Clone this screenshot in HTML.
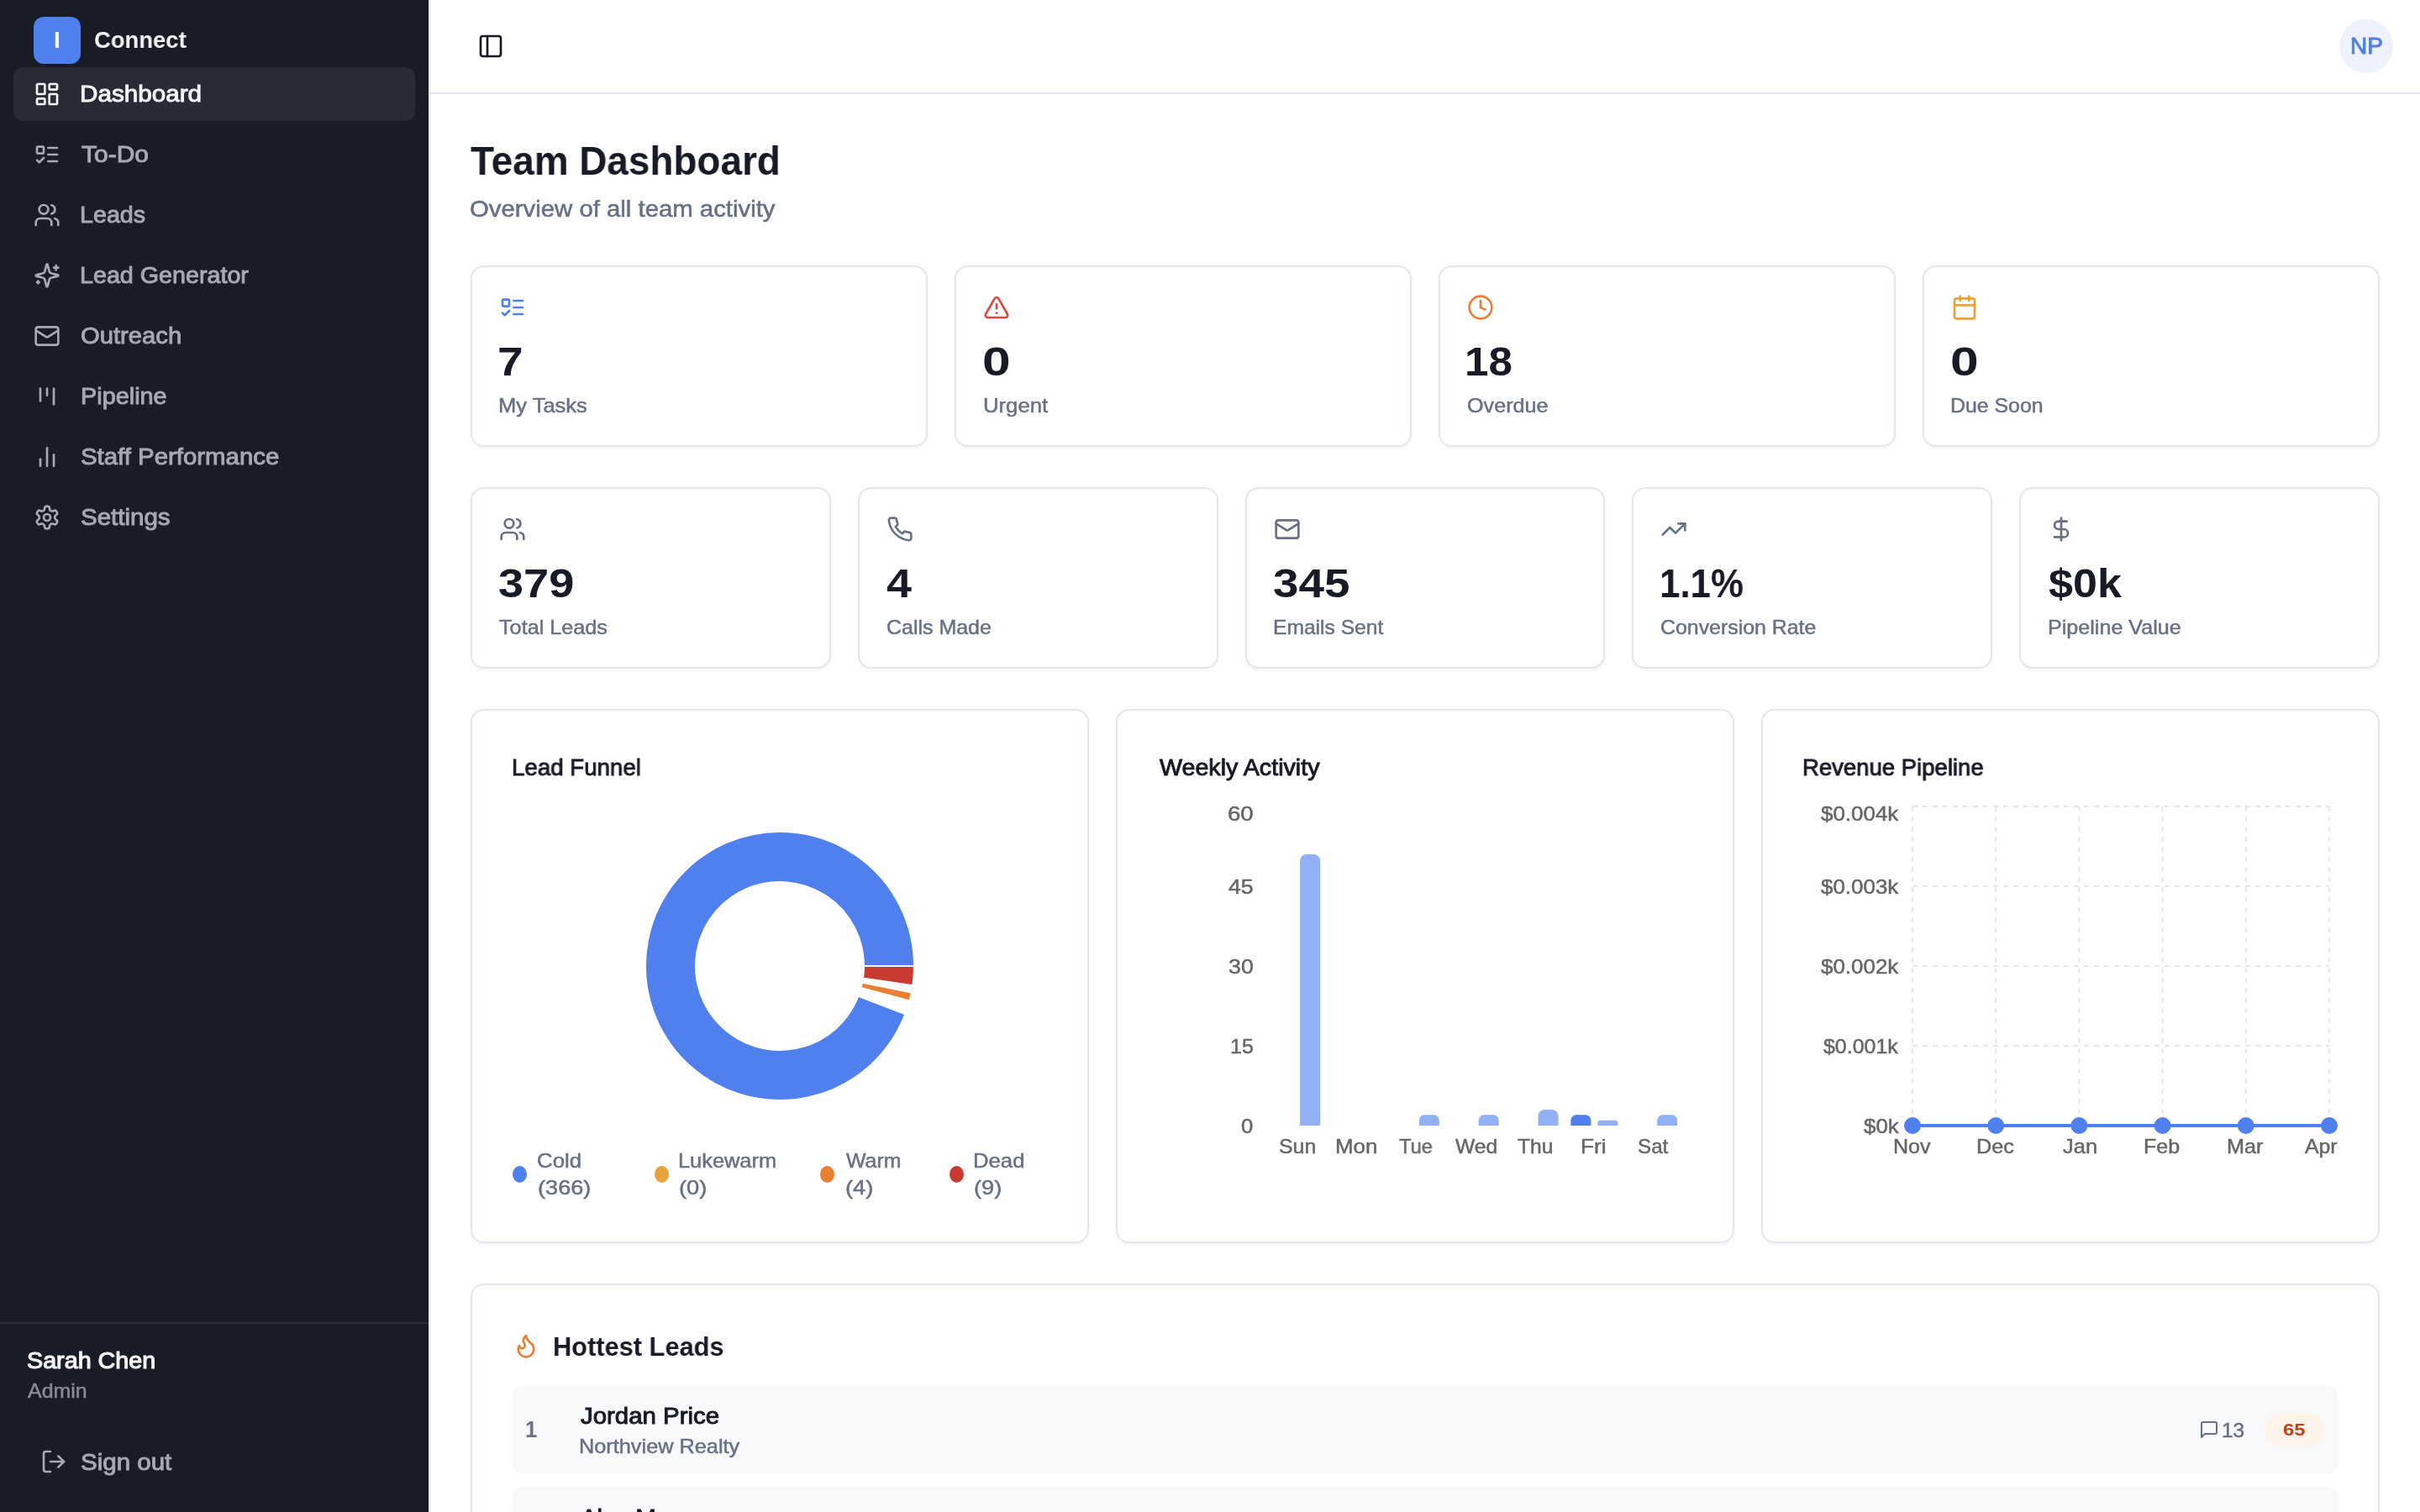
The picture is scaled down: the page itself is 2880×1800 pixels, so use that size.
<!DOCTYPE html>
<html lang="en"><head><meta charset="utf-8"><title>Connect - Team Dashboard</title>
<meta name="viewport" content="width=2880">
<style>
*{box-sizing:border-box;margin:0;padding:0}
html,body{width:2880px;height:1800px;overflow:hidden;background:#fff}
@media (max-width:2000px){html{zoom:.5}}
body{font-family:"Liberation Sans",sans-serif;color:#181b25;position:relative;-webkit-font-smoothing:antialiased}
.abs{position:absolute}
.ic{display:block;flex:none}
.t{position:absolute;white-space:nowrap;line-height:1;will-change:transform}
/* sidebar */
#sidebar{position:absolute;left:0;top:0;width:512px;height:1800px;background:#191c26;border-right:2px solid #e3e7ec}
.logo{position:absolute;left:40px;top:20px;width:56px;height:56px;border-radius:12px;background:#4f80ed;}
.nav{position:absolute;left:16px;width:478px;height:64px;border-radius:12px;color:#a6a9b2}
.nav.active{background:#272b36;color:#f4f5f7}
.nav .ic{position:absolute;left:24px;top:16px}
.sep{position:absolute;left:0;top:1574px;width:510px;height:2px;background:#2b2e3a}
/* header */
#header{position:absolute;left:512px;top:0;width:2368px;height:112px;border-bottom:2px solid #e3e7ec;background:#fff}
.avatar{position:absolute;left:2784px;top:23px;width:64px;height:64px;border-radius:50%;background:#eef2fd}
/* cards */
.card{position:absolute;background:#fff;border:2px solid #e3e7ec;border-radius:16px;box-shadow:0 2px 4px rgba(16,24,40,.05)}
.row{position:absolute;background:#f8f9fb;border-radius:12px}
.badge{position:absolute;border-radius:999px;background:#fff4ea}
.dot{position:absolute;border-radius:50%}
</style></head>
<body>
<aside id="sidebar"><div class="logo"></div><div class="t" style="left:68px;transform:translateX(-50%);top:33.90px;font-size:28px;color:#fff;font-weight:700;">I</div><div class="t" id="connect" style="left:111.65px;top:34.30px;font-size:28px;color:#f4f5f7;font-weight:700;transform:scaleX(0.9784);transform-origin:0 50%;">Connect</div><a class="nav active" style="top:80px"><svg class="ic" width="32" height="32" viewBox="0 0 24 24" fill="none" stroke="currentColor" stroke-width="2" stroke-linecap="round" stroke-linejoin="round" style=""><rect width="7" height="9" x="3" y="3" rx="1"/><rect width="7" height="5" x="14" y="3" rx="1"/><rect width="7" height="9" x="14" y="12" rx="1"/><rect width="7" height="5" x="3" y="16" rx="1"/></svg></a><div class="t" id="nav0" style="left:95.23px;top:98.30px;font-size:28px;color:#f4f5f7;font-weight:400;-webkit-text-stroke:0.95px #f4f5f7;transform:scaleX(1.0586);transform-origin:0 50%;">Dashboard</div><a class="nav" style="top:152px"><svg class="ic" width="32" height="32" viewBox="0 0 24 24" fill="none" stroke="currentColor" stroke-width="2" stroke-linecap="round" stroke-linejoin="round" style=""><rect x="3" y="5" width="6" height="6" rx="1"/><path d="m3 17 2 2 4-4"/><path d="M13 6h8"/><path d="M13 12h8"/><path d="M13 18h8"/></svg></a><div class="t" id="nav1" style="left:96.72px;top:170.30px;font-size:28px;color:#a6a9b2;font-weight:400;-webkit-text-stroke:0.95px #a6a9b2;transform:scaleX(1.0702);transform-origin:0 50%;">To-Do</div><a class="nav" style="top:224px"><svg class="ic" width="32" height="32" viewBox="0 0 24 24" fill="none" stroke="currentColor" stroke-width="2" stroke-linecap="round" stroke-linejoin="round" style=""><path d="M16 21v-2a4 4 0 0 0-4-4H6a4 4 0 0 0-4 4v2"/><circle cx="9" cy="7" r="4"/><path d="M22 21v-2a4 4 0 0 0-3-3.87"/><path d="M16 3.13a4 4 0 0 1 0 7.75"/></svg></a><div class="t" id="nav2" style="left:94.96px;top:242.30px;font-size:28px;color:#a6a9b2;font-weight:400;-webkit-text-stroke:0.95px #a6a9b2;transform:scaleX(1.0236);transform-origin:0 50%;">Leads</div><a class="nav" style="top:296px"><svg class="ic" width="32" height="32" viewBox="0 0 24 24" fill="none" stroke="currentColor" stroke-width="2" stroke-linecap="round" stroke-linejoin="round" style=""><path d="M9.937 15.5A2 2 0 0 0 8.5 14.063l-6.135-1.582a.5.5 0 0 1 0-.962L8.5 9.936A2 2 0 0 0 9.937 8.5l1.582-6.135a.5.5 0 0 1 .963 0L14.063 8.5A2 2 0 0 0 15.5 9.937l6.135 1.581a.5.5 0 0 1 0 .964L15.5 14.063a2 2 0 0 0-1.437 1.437l-1.582 6.135a.5.5 0 0 1-.963 0z"/><path d="M20 3v4"/><path d="M22 5h-4"/><path d="M4 17v2"/><path d="M5 18H3"/></svg></a><div class="t" id="nav3" style="left:94.96px;top:314.30px;font-size:28px;color:#a6a9b2;font-weight:400;-webkit-text-stroke:0.95px #a6a9b2;transform:scaleX(1.0244);transform-origin:0 50%;">Lead Generator</div><a class="nav" style="top:368px"><svg class="ic" width="32" height="32" viewBox="0 0 24 24" fill="none" stroke="currentColor" stroke-width="2" stroke-linecap="round" stroke-linejoin="round" style=""><rect width="20" height="16" x="2" y="4" rx="2"/><path d="m22 7-8.97 5.7a1.94 1.94 0 0 1-2.06 0L2 7"/></svg></a><div class="t" id="nav4" style="left:96.18px;top:386.30px;font-size:28px;color:#a6a9b2;font-weight:400;-webkit-text-stroke:0.95px #a6a9b2;transform:scaleX(1.0431);transform-origin:0 50%;">Outreach</div><a class="nav" style="top:440px"><svg class="ic" width="32" height="32" viewBox="0 0 24 24" fill="none" stroke="currentColor" stroke-width="2" stroke-linecap="round" stroke-linejoin="round" style=""><path d="M6 5v11"/><path d="M12 5v6"/><path d="M18 5v14"/></svg></a><div class="t" id="nav5" style="left:95.64px;top:458.30px;font-size:28px;color:#a6a9b2;font-weight:400;-webkit-text-stroke:0.95px #a6a9b2;transform:scaleX(1.0303);transform-origin:0 50%;">Pipeline</div><a class="nav" style="top:512px"><svg class="ic" width="32" height="32" viewBox="0 0 24 24" fill="none" stroke="currentColor" stroke-width="2" stroke-linecap="round" stroke-linejoin="round" style=""><line x1="18" x2="18" y1="20" y2="10"/><line x1="12" x2="12" y1="20" y2="4"/><line x1="6" x2="6" y1="20" y2="14"/></svg></a><div class="t" id="nav6" style="left:96.24px;top:530.30px;font-size:28px;color:#a6a9b2;font-weight:400;-webkit-text-stroke:0.95px #a6a9b2;transform:scaleX(1.0493);transform-origin:0 50%;">Staff Performance</div><a class="nav" style="top:584px"><svg class="ic" width="32" height="32" viewBox="0 0 24 24" fill="none" stroke="currentColor" stroke-width="2" stroke-linecap="round" stroke-linejoin="round" style=""><path d="M12.22 2h-.44a2 2 0 0 0-2 2v.18a2 2 0 0 1-1 1.73l-.43.25a2 2 0 0 1-2 0l-.15-.08a2 2 0 0 0-2.73.73l-.22.38a2 2 0 0 0 .73 2.73l.15.1a2 2 0 0 1 1 1.72v.51a2 2 0 0 1-1 1.74l-.15.09a2 2 0 0 0-.73 2.73l.22.38a2 2 0 0 0 2.73.73l.15-.08a2 2 0 0 1 2 0l.43.25a2 2 0 0 1 1 1.73V20a2 2 0 0 0 2 2h.44a2 2 0 0 0 2-2v-.18a2 2 0 0 1 1-1.73l.43-.25a2 2 0 0 1 2 0l.15.08a2 2 0 0 0 2.73-.73l.22-.39a2 2 0 0 0-.73-2.73l-.15-.08a2 2 0 0 1-1-1.74v-.5a2 2 0 0 1 1-1.74l.15-.09a2 2 0 0 0 .73-2.73l-.22-.38a2 2 0 0 0-2.73-.73l-.15.08a2 2 0 0 1-2 0l-.43-.25a2 2 0 0 1-1-1.73V4a2 2 0 0 0-2-2z"/><circle cx="12" cy="12" r="3"/></svg></a><div class="t" id="nav7" style="left:96.24px;top:602.30px;font-size:28px;color:#a6a9b2;font-weight:400;-webkit-text-stroke:0.95px #a6a9b2;transform:scaleX(1.0537);transform-origin:0 50%;">Settings</div><div class="sep"></div><div class="t" id="sarah" style="left:32.01px;top:1606.30px;font-size:28px;color:#f4f5f7;font-weight:400;-webkit-text-stroke:1.15px #f4f5f7;transform:scaleX(1.0255);transform-origin:0 50%;">Sarah Chen</div><div class="t" id="admin" style="left:32.61px;top:1644.18px;font-size:24px;color:#888b95;font-weight:400;-webkit-text-stroke:0.48px #888b95;transform:scaleX(1.0387);transform-origin:0 50%;">Admin</div><div class="abs" style="left:48px;top:1724px;color:#a6a9b2"><svg class="ic" width="32" height="32" viewBox="0 0 24 24" fill="none" stroke="currentColor" stroke-width="2" stroke-linecap="round" stroke-linejoin="round" style=""><path d="M9 21H5a2 2 0 0 1-2-2V5a2 2 0 0 1 2-2h4"/><polyline points="16 17 21 12 16 7"/><line x1="21" x2="9" y1="12" y2="12"/></svg></div><div class="t" id="signout" style="left:95.84px;top:1726.80px;font-size:28px;color:#a6a9b2;font-weight:400;-webkit-text-stroke:0.95px #a6a9b2;transform:scaleX(1.0543);transform-origin:0 50%;">Sign out</div></aside><header id="header"></header><div class="abs" style="left:568px;top:39px;color:#181b25"><svg class="ic" width="32" height="32" viewBox="0 0 24 24" fill="none" stroke="currentColor" stroke-width="2" stroke-linecap="round" stroke-linejoin="round" style=""><rect width="18" height="18" x="3" y="3" rx="2"/><path d="M9 3v18"/></svg></div><div class="avatar"></div><div class="t" id="np" style="left:2796.93px;top:41.20px;font-size:28px;color:#4f80ed;font-weight:400;-webkit-text-stroke:0.95px #4f80ed;transform:scaleX(0.9901);transform-origin:0 50%;">NP</div><div class="t" id="title" style="left:559.87px;top:167.67px;font-size:48px;color:#181b25;font-weight:700;transform:scaleX(0.9559);transform-origin:0 50%;">Team Dashboard</div><div class="t" id="subtitle" style="left:559.19px;top:235.20px;font-size:28px;color:#677084;font-weight:400;-webkit-text-stroke:0.56px #677084;transform:scaleX(1.0475);transform-origin:0 50%;">Overview of all team activity</div><section class="card" style="left:560px;top:316px;width:544px;height:216px"></section><div class="abs" style="left:594px;top:350px"><svg class="ic" width="32" height="32" viewBox="0 0 24 24" fill="none" stroke="#4f80ed" stroke-width="2" stroke-linecap="round" stroke-linejoin="round" style=""><rect x="3" y="5" width="6" height="6" rx="1"/><path d="m3 17 2 2 4-4"/><path d="M13 6h8"/><path d="M13 12h8"/><path d="M13 18h8"/></svg></div><div class="t" id="s1n0" style="left:592.22px;top:407.17px;font-size:48px;color:#181b25;font-weight:700;transform:scaleX(1.1463);transform-origin:0 50%;">7</div><div class="t" id="s1l0" style="left:592.81px;top:471.08px;font-size:24px;color:#677084;font-weight:400;-webkit-text-stroke:0.48px #677084;transform:scaleX(1.0628);transform-origin:0 50%;">My Tasks</div><section class="card" style="left:1136px;top:316px;width:544px;height:216px"></section><div class="abs" style="left:1170px;top:350px"><svg class="ic" width="32" height="32" viewBox="0 0 24 24" fill="none" stroke="#dc4a3f" stroke-width="2" stroke-linecap="round" stroke-linejoin="round" style=""><path d="m21.73 18-8-14a2 2 0 0 0-3.48 0l-8 14A2 2 0 0 0 4 21h16a2 2 0 0 0 1.73-3"/><path d="M12 9v4"/><path d="M12 17h.01"/></svg></div><div class="t" id="s1n1" style="left:1168.78px;top:407.17px;font-size:48px;color:#181b25;font-weight:700;transform:scaleX(1.2602);transform-origin:0 50%;">0</div><div class="t" id="s1l1" style="left:1169.59px;top:471.08px;font-size:24px;color:#677084;font-weight:400;-webkit-text-stroke:0.48px #677084;transform:scaleX(1.0699);transform-origin:0 50%;">Urgent</div><section class="card" style="left:1712px;top:316px;width:544px;height:216px"></section><div class="abs" style="left:1746px;top:350px"><svg class="ic" width="32" height="32" viewBox="0 0 24 24" fill="none" stroke="#e97f35" stroke-width="2" stroke-linecap="round" stroke-linejoin="round" style=""><circle cx="12" cy="12" r="10"/><polyline points="12 6 12 12 16 14"/></svg></div><div class="t" id="s1n2" style="left:1743.06px;top:407.17px;font-size:48px;color:#181b25;font-weight:700;transform:scaleX(1.0678);transform-origin:0 50%;">18</div><div class="t" id="s1l2" style="left:1745.66px;top:471.08px;font-size:24px;color:#677084;font-weight:400;-webkit-text-stroke:0.48px #677084;transform:scaleX(1.049);transform-origin:0 50%;">Overdue</div><section class="card" style="left:2288px;top:316px;width:544px;height:216px"></section><div class="abs" style="left:2322px;top:350px"><svg class="ic" width="32" height="32" viewBox="0 0 24 24" fill="none" stroke="#e9a23b" stroke-width="2" stroke-linecap="round" stroke-linejoin="round" style=""><path d="M8 2v4"/><path d="M16 2v4"/><rect width="18" height="18" x="3" y="4" rx="2"/><path d="M3 10h18"/></svg></div><div class="t" id="s1n3" style="left:2320.78px;top:407.17px;font-size:48px;color:#181b25;font-weight:700;transform:scaleX(1.2602);transform-origin:0 50%;">0</div><div class="t" id="s1l3" style="left:2321.46px;top:471.08px;font-size:24px;color:#677084;font-weight:400;-webkit-text-stroke:0.48px #677084;transform:scaleX(1.0358);transform-origin:0 50%;">Due Soon</div><section class="card" style="left:560.0px;top:580px;width:428.8px;height:216px"></section><div class="abs" style="left:594.0px;top:614px"><svg class="ic" width="32" height="32" viewBox="0 0 24 24" fill="none" stroke="#677084" stroke-width="2" stroke-linecap="round" stroke-linejoin="round" style=""><path d="M16 21v-2a4 4 0 0 0-4-4H6a4 4 0 0 0-4 4v2"/><circle cx="9" cy="7" r="4"/><path d="M22 21v-2a4 4 0 0 0-3-3.87"/><path d="M16 3.13a4 4 0 0 1 0 7.75"/></svg></div><div class="t" id="s2n0" style="left:593.01px;top:671.17px;font-size:48px;color:#181b25;font-weight:700;transform:scaleX(1.1276);transform-origin:0 50%;">379</div><div class="t" id="s2l0" style="left:594.35px;top:735.08px;font-size:24px;color:#677084;font-weight:400;-webkit-text-stroke:0.48px #677084;transform:scaleX(1.0504);transform-origin:0 50%;">Total Leads</div><section class="card" style="left:1020.8px;top:580px;width:428.8px;height:216px"></section><div class="abs" style="left:1054.8px;top:614px"><svg class="ic" width="32" height="32" viewBox="0 0 24 24" fill="none" stroke="#677084" stroke-width="2" stroke-linecap="round" stroke-linejoin="round" style=""><path d="M22 16.92v3a2 2 0 0 1-2.18 2 19.79 19.79 0 0 1-8.63-3.07 19.5 19.5 0 0 1-6-6 19.79 19.79 0 0 1-3.07-8.67A2 2 0 0 1 4.11 2h3a2 2 0 0 1 2 1.72 12.84 12.84 0 0 0 .7 2.81 2 2 0 0 1-.45 2.11L8.09 9.91a16 16 0 0 0 6 6l1.27-1.27a2 2 0 0 1 2.11-.45 12.84 12.84 0 0 0 2.81.7A2 2 0 0 1 22 16.92z"/></svg></div><div class="t" id="s2n1" style="left:1054.85px;top:671.17px;font-size:48px;color:#181b25;font-weight:700;transform:scaleX(1.1207);transform-origin:0 50%;">4</div><div class="t" id="s2l1" style="left:1054.53px;top:735.08px;font-size:24px;color:#677084;font-weight:400;-webkit-text-stroke:0.48px #677084;transform:scaleX(1.0402);transform-origin:0 50%;">Calls Made</div><section class="card" style="left:1481.6px;top:580px;width:428.8px;height:216px"></section><div class="abs" style="left:1515.6px;top:614px"><svg class="ic" width="32" height="32" viewBox="0 0 24 24" fill="none" stroke="#677084" stroke-width="2" stroke-linecap="round" stroke-linejoin="round" style=""><rect width="20" height="16" x="2" y="4" rx="2"/><path d="m22 7-8.97 5.7a1.94 1.94 0 0 1-2.06 0L2 7"/></svg></div><div class="t" id="s2n2" style="left:1514.63px;top:671.17px;font-size:48px;color:#181b25;font-weight:700;transform:scaleX(1.1408);transform-origin:0 50%;">345</div><div class="t" id="s2l2" style="left:1514.56px;top:735.08px;font-size:24px;color:#677084;font-weight:400;-webkit-text-stroke:0.48px #677084;transform:scaleX(1.0248);transform-origin:0 50%;">Emails Sent</div><section class="card" style="left:1942.4px;top:580px;width:428.8px;height:216px"></section><div class="abs" style="left:1976.4px;top:614px"><svg class="ic" width="32" height="32" viewBox="0 0 24 24" fill="none" stroke="#677084" stroke-width="2" stroke-linecap="round" stroke-linejoin="round" style=""><polyline points="22 7 13.5 15.5 8.5 10.5 2 17"/><polyline points="16 7 22 7 22 13"/></svg></div><div class="t" id="s2n3" style="left:1974.58px;top:671.17px;font-size:48px;color:#181b25;font-weight:700;transform:scaleX(0.9134);transform-origin:0 50%;">1.1%</div><div class="t" id="s2l3" style="left:1976.25px;top:735.08px;font-size:24px;color:#677084;font-weight:400;-webkit-text-stroke:0.48px #677084;transform:scaleX(1.0368);transform-origin:0 50%;">Conversion Rate</div><section class="card" style="left:2403.2px;top:580px;width:428.8px;height:216px"></section><div class="abs" style="left:2437.2px;top:614px"><svg class="ic" width="32" height="32" viewBox="0 0 24 24" fill="none" stroke="#677084" stroke-width="2" stroke-linecap="round" stroke-linejoin="round" style=""><line x1="12" x2="12" y1="2" y2="22"/><path d="M17 5H9.5a3.5 3.5 0 0 0 0 7h5a3.5 3.5 0 0 1 0 7H6"/></svg></div><div class="t" id="s2n4" style="left:2438.02px;top:671.17px;font-size:48px;color:#181b25;font-weight:700;transform:scaleX(1.085);transform-origin:0 50%;">$0k</div><div class="t" id="s2l4" style="left:2437.13px;top:735.08px;font-size:24px;color:#677084;font-weight:400;-webkit-text-stroke:0.48px #677084;transform:scaleX(1.0462);transform-origin:0 50%;">Pipeline Value</div><section class="card" style="left:560px;top:844px;width:736px;height:636px"></section><div class="t" id="ct0" style="left:609.1px;top:900.30px;font-size:28px;color:#181b25;font-weight:400;-webkit-text-stroke:0.95px #181b25;transform:scaleX(0.9882);transform-origin:0 50%;">Lead Funnel</div><section class="card" style="left:1328px;top:844px;width:736px;height:636px"></section><div class="t" id="ct1" style="left:1379.62px;top:900.30px;font-size:28px;color:#181b25;font-weight:400;-webkit-text-stroke:0.95px #181b25;transform:scaleX(1.0229);transform-origin:0 50%;">Weekly Activity</div><section class="card" style="left:2096px;top:844px;width:736px;height:636px"></section><div class="t" id="ct2" style="left:2144.71px;top:900.30px;font-size:28px;color:#181b25;font-weight:400;-webkit-text-stroke:0.95px #181b25;transform:scaleX(0.9824);transform-origin:0 50%;">Revenue Pipeline</div><svg class="abs" style="left:610px;top:950px" width="636" height="400" viewBox="0 0 636 400"><path d="M478.00,200.00A160,160,0,1,0,467.33,257.44L411.33,235.90A100,100,0,1,1,418.00,200.00Z" fill="#4f80ed" stroke="#fff" stroke-width="2"/><path d="M472.52,241.52A160,160,0,0,0,474.88,231.45L416.05,219.65A100,100,0,0,1,414.57,225.95Z" fill="#e97f35" stroke="#fff" stroke-width="2"/><path d="M476.31,223.19A160,160,0,0,0,478.00,200.00L418.00,200.00A100,100,0,0,1,416.94,214.50Z" fill="#c93a32" stroke="#fff" stroke-width="2"/></svg><div class="dot" style="left:610px;top:1388px;width:17px;height:20px;background:#4f80ed"></div><div class="t" id="lgA0" style="left:639.0px;top:1370.48px;font-size:24px;color:#677084;font-weight:400;-webkit-text-stroke:0.48px #677084;transform:scaleX(1.0748);transform-origin:0 50%;">Cold</div><div class="t" id="lgB0" style="left:639.69px;top:1402.48px;font-size:24px;color:#677084;font-weight:400;-webkit-text-stroke:0.48px #677084;transform:scaleX(1.1311);transform-origin:0 50%;">(366)</div><div class="dot" style="left:779px;top:1388px;width:17px;height:20px;background:#e9a23b"></div><div class="t" id="lgA1" style="left:807.22px;top:1370.48px;font-size:24px;color:#677084;font-weight:400;-webkit-text-stroke:0.48px #677084;transform:scaleX(1.0572);transform-origin:0 50%;">Lukewarm</div><div class="t" id="lgB1" style="left:808.28px;top:1402.48px;font-size:24px;color:#677084;font-weight:400;-webkit-text-stroke:0.48px #677084;transform:scaleX(1.1385);transform-origin:0 50%;">(0)</div><div class="dot" style="left:976px;top:1388px;width:17px;height:20px;background:#e97f35"></div><div class="t" id="lgA2" style="left:1006.5px;top:1370.48px;font-size:24px;color:#677084;font-weight:400;-webkit-text-stroke:0.48px #677084;transform:scaleX(1.0368);transform-origin:0 50%;">Warm</div><div class="t" id="lgB2" style="left:1005.88px;top:1402.48px;font-size:24px;color:#677084;font-weight:400;-webkit-text-stroke:0.48px #677084;transform:scaleX(1.1348);transform-origin:0 50%;">(4)</div><div class="dot" style="left:1130px;top:1388px;width:17px;height:20px;background:#c93a32"></div><div class="t" id="lgA3" style="left:1158.2px;top:1370.48px;font-size:24px;color:#677084;font-weight:400;-webkit-text-stroke:0.48px #677084;transform:scaleX(1.0714);transform-origin:0 50%;">Dead</div><div class="t" id="lgB3" style="left:1159.49px;top:1402.48px;font-size:24px;color:#677084;font-weight:400;-webkit-text-stroke:0.48px #677084;transform:scaleX(1.131);transform-origin:0 50%;">(9)</div><div class="t" id="by0" style="left:1476.6px;top:1328.98px;font-size:24px;color:#666666;font-weight:400;-webkit-text-stroke:0.48px #666666;transform:scaleX(1.0727);transform-origin:0 50%;">0</div><div class="t" id="by1" style="left:1464.08px;top:1233.98px;font-size:24px;color:#666666;font-weight:400;-webkit-text-stroke:0.48px #666666;transform:scaleX(1.0407);transform-origin:0 50%;">15</div><div class="t" id="by2" style="left:1462.05px;top:1138.98px;font-size:24px;color:#666666;font-weight:400;-webkit-text-stroke:0.48px #666666;transform:scaleX(1.1183);transform-origin:0 50%;">30</div><div class="t" id="by3" style="left:1462.26px;top:1043.98px;font-size:24px;color:#666666;font-weight:400;-webkit-text-stroke:0.48px #666666;transform:scaleX(1.112);transform-origin:0 50%;">45</div><div class="t" id="by4" style="left:1461.24px;top:956.98px;font-size:24px;color:#666666;font-weight:400;-webkit-text-stroke:0.48px #666666;transform:scaleX(1.15);transform-origin:0 50%;">60</div><svg class="abs" style="left:1378px;top:950px" width="636" height="460" viewBox="1378 950 636 460"><path d="M1547.09,1025.00A8.00,8.00,0,0,1,1555.09,1017.00L1563.09,1017.00A8.00,8.00,0,0,1,1571.09,1025.00L1571.09,1340L1547.09,1340Z" fill="#92b0f5"/><path d="M1688.80,1333.67A6.33,6.33,0,0,1,1695.13,1327.33L1706.47,1327.33A6.33,6.33,0,0,1,1712.80,1333.67L1712.80,1340L1688.80,1340Z" fill="#92b0f5"/><path d="M1759.66,1333.67A6.33,6.33,0,0,1,1765.99,1327.33L1777.32,1327.33A6.33,6.33,0,0,1,1783.66,1333.67L1783.66,1340L1759.66,1340Z" fill="#92b0f5"/><path d="M1830.51,1329.00A8.00,8.00,0,0,1,1838.51,1321.00L1846.51,1321.00A8.00,8.00,0,0,1,1854.51,1329.00L1854.51,1340L1830.51,1340Z" fill="#92b0f5"/><path d="M1869.37,1333.67A6.33,6.33,0,0,1,1875.70,1327.33L1887.04,1327.33A6.33,6.33,0,0,1,1893.37,1333.67L1893.37,1340L1869.37,1340Z" fill="#4f80ed"/><path d="M1901.37,1336.83A3.17,3.17,0,0,1,1904.54,1333.67L1922.20,1333.67A3.17,3.17,0,0,1,1925.37,1336.83L1925.37,1340L1901.37,1340Z" fill="#92b0f5"/><path d="M1972.23,1333.67A6.33,6.33,0,0,1,1978.56,1327.33L1989.90,1327.33A6.33,6.33,0,0,1,1996.23,1333.67L1996.23,1340L1972.23,1340Z" fill="#92b0f5"/></svg><div class="t" id="bx0" style="left:1521.79px;top:1352.68px;font-size:24px;color:#666666;font-weight:400;-webkit-text-stroke:0.48px #666666;transform:scaleX(1.0356);transform-origin:0 50%;">Sun</div><div class="t" id="bx1" style="left:1589.18px;top:1352.68px;font-size:24px;color:#666666;font-weight:400;-webkit-text-stroke:0.48px #666666;transform:scaleX(1.0784);transform-origin:0 50%;">Mon</div><div class="t" id="bx2" style="left:1665.4px;top:1352.68px;font-size:24px;color:#666666;font-weight:400;-webkit-text-stroke:0.48px #666666;transform:scaleX(0.9865);transform-origin:0 50%;">Tue</div><div class="t" id="bx3" style="left:1731.77px;top:1352.68px;font-size:24px;color:#666666;font-weight:400;-webkit-text-stroke:0.48px #666666;transform:scaleX(1.0262);transform-origin:0 50%;">Wed</div><div class="t" id="bx4" style="left:1806.24px;top:1352.68px;font-size:24px;color:#666666;font-weight:400;-webkit-text-stroke:0.48px #666666;transform:scaleX(1.0257);transform-origin:0 50%;">Thu</div><div class="t" id="bx5" style="left:1881.44px;top:1352.68px;font-size:24px;color:#666666;font-weight:400;-webkit-text-stroke:0.48px #666666;transform:scaleX(1.096);transform-origin:0 50%;">Fri</div><div class="t" id="bx6" style="left:1949.32px;top:1352.68px;font-size:24px;color:#666666;font-weight:400;-webkit-text-stroke:0.48px #666666;transform:scaleX(1.009);transform-origin:0 50%;">Sat</div><svg class="abs" style="left:2146px;top:950px" width="636" height="460" viewBox="2146 950 636 460"><line x1="2276" y1="960" x2="2772" y2="960" stroke="#e4e7ed" stroke-width="2" stroke-dasharray="6 6" fill="none"/><line x1="2276" y1="1055" x2="2772" y2="1055" stroke="#e4e7ed" stroke-width="2" stroke-dasharray="6 6" fill="none"/><line x1="2276" y1="1150" x2="2772" y2="1150" stroke="#e4e7ed" stroke-width="2" stroke-dasharray="6 6" fill="none"/><line x1="2276" y1="1245" x2="2772" y2="1245" stroke="#e4e7ed" stroke-width="2" stroke-dasharray="6 6" fill="none"/><line x1="2276" y1="1340" x2="2772" y2="1340" stroke="#e4e7ed" stroke-width="2" stroke-dasharray="6 6" fill="none"/><line x1="2276.0" y1="960" x2="2276.0" y2="1340" stroke="#e4e7ed" stroke-width="2" stroke-dasharray="6 6" fill="none"/><line x1="2375.2" y1="960" x2="2375.2" y2="1340" stroke="#e4e7ed" stroke-width="2" stroke-dasharray="6 6" fill="none"/><line x1="2474.4" y1="960" x2="2474.4" y2="1340" stroke="#e4e7ed" stroke-width="2" stroke-dasharray="6 6" fill="none"/><line x1="2573.6" y1="960" x2="2573.6" y2="1340" stroke="#e4e7ed" stroke-width="2" stroke-dasharray="6 6" fill="none"/><line x1="2672.8" y1="960" x2="2672.8" y2="1340" stroke="#e4e7ed" stroke-width="2" stroke-dasharray="6 6" fill="none"/><line x1="2772.0" y1="960" x2="2772.0" y2="1340" stroke="#e4e7ed" stroke-width="2" stroke-dasharray="6 6" fill="none"/><line x1="2276" y1="1340" x2="2772" y2="1340" stroke="#4f80ed" stroke-width="4"/><circle cx="2276.0" cy="1340" r="8" fill="#4f80ed" stroke="#4f80ed" stroke-width="4"/><circle cx="2375.2" cy="1340" r="8" fill="#4f80ed" stroke="#4f80ed" stroke-width="4"/><circle cx="2474.4" cy="1340" r="8" fill="#4f80ed" stroke="#4f80ed" stroke-width="4"/><circle cx="2573.6" cy="1340" r="8" fill="#4f80ed" stroke="#4f80ed" stroke-width="4"/><circle cx="2672.8" cy="1340" r="8" fill="#4f80ed" stroke="#4f80ed" stroke-width="4"/><circle cx="2772.0" cy="1340" r="8" fill="#4f80ed" stroke="#4f80ed" stroke-width="4"/></svg><div class="t" id="ly0" style="left:2217.85px;top:1328.98px;font-size:24px;color:#666666;font-weight:400;-webkit-text-stroke:0.48px #666666;transform:scaleX(1.0811);transform-origin:0 50%;">$0k</div><div class="t" id="ly1" style="left:2170.22px;top:1233.98px;font-size:24px;color:#666666;font-weight:400;-webkit-text-stroke:0.48px #666666;transform:scaleX(1.0386);transform-origin:0 50%;">$0.001k</div><div class="t" id="ly2" style="left:2166.59px;top:1138.98px;font-size:24px;color:#666666;font-weight:400;-webkit-text-stroke:0.48px #666666;transform:scaleX(1.0808);transform-origin:0 50%;">$0.002k</div><div class="t" id="ly3" style="left:2166.59px;top:1043.98px;font-size:24px;color:#666666;font-weight:400;-webkit-text-stroke:0.48px #666666;transform:scaleX(1.0808);transform-origin:0 50%;">$0.003k</div><div class="t" id="ly4" style="left:2166.59px;top:956.98px;font-size:24px;color:#666666;font-weight:400;-webkit-text-stroke:0.48px #666666;transform:scaleX(1.0808);transform-origin:0 50%;">$0.004k</div><div class="t" id="lx0" style="left:2252.84px;top:1352.68px;font-size:24px;color:#666666;font-weight:400;-webkit-text-stroke:0.48px #666666;transform:scaleX(1.0433);transform-origin:0 50%;">Nov</div><div class="t" id="lx1" style="left:2352.32px;top:1352.68px;font-size:24px;color:#666666;font-weight:400;-webkit-text-stroke:0.48px #666666;transform:scaleX(1.0509);transform-origin:0 50%;">Dec</div><div class="t" id="lx2" style="left:2454.86px;top:1352.68px;font-size:24px;color:#666666;font-weight:400;-webkit-text-stroke:0.48px #666666;transform:scaleX(1.0609);transform-origin:0 50%;">Jan</div><div class="t" id="lx3" style="left:2551.04px;top:1352.68px;font-size:24px;color:#666666;font-weight:400;-webkit-text-stroke:0.48px #666666;transform:scaleX(1.0428);transform-origin:0 50%;">Feb</div><div class="t" id="lx4" style="left:2650.15px;top:1352.68px;font-size:24px;color:#666666;font-weight:400;-webkit-text-stroke:0.48px #666666;transform:scaleX(1.0501);transform-origin:0 50%;">Mar</div><div class="t" id="lx5" style="left:2742.54px;top:1352.68px;font-size:24px;color:#666666;font-weight:400;-webkit-text-stroke:0.48px #666666;transform:scaleX(1.0339);transform-origin:0 50%;">Apr</div><section class="card" style="left:560px;top:1528px;width:2272px;height:420px"></section><div class="abs" style="left:610px;top:1586px"><svg class="ic" width="32" height="32" viewBox="0 0 24 24" fill="none" stroke="#e97f35" stroke-width="2" stroke-linecap="round" stroke-linejoin="round" style=""><path d="M8.5 14.5A2.5 2.5 0 0 0 11 12c0-1.38-.5-2-1-3-1.072-2.143-.224-4.054 2-6 .5 2.5 2 4.900 4 6.500 2 1.600 3 3.500 3 5.500a7 7 0 1 1-14 0c0-1.153.433-2.294 1-3a2.5 2.5 0 0 0 2.5 2.500z"/></svg></div><div class="t" id="hot" style="left:657.62px;top:1587.11px;font-size:32px;color:#181b25;font-weight:700;transform:scaleX(0.9619);transform-origin:0 50%;">Hottest Leads</div><div class="row" style="left:610px;top:1650px;width:2172px;height:104px"></div><div class="t" id="rank0" style="left:625.2px;top:1687.90px;font-size:28px;color:#677084;font-weight:700;transform:scaleX(0.9112);transform-origin:0 50%;">1</div><div class="t" id="name0" style="left:691.13px;top:1671.80px;font-size:28px;color:#181b25;font-weight:400;-webkit-text-stroke:0.95px #181b25;transform:scaleX(1.0505);transform-origin:0 50%;">Jordan Price</div><div class="t" id="comp0" style="left:689.43px;top:1710.38px;font-size:24px;color:#677084;font-weight:400;-webkit-text-stroke:0.48px #677084;transform:scaleX(1.0541);transform-origin:0 50%;">Northview Realty</div><div class="abs" style="left:2617px;top:1690px"><svg class="ic" width="24" height="24" viewBox="0 0 24 24" fill="none" stroke="#677084" stroke-width="2" stroke-linecap="round" stroke-linejoin="round" style=""><path d="M21 15a2 2 0 0 1-2 2H7l-4 4V5a2 2 0 0 1 2-2h14a2 2 0 0 1 2 2z"/></svg></div><div class="t" id="notes0" style="left:2644.11px;top:1691.18px;font-size:24px;color:#677084;font-weight:400;-webkit-text-stroke:0.48px #677084;transform:scaleX(1.0176);transform-origin:0 50%;">13</div><div class="badge" style="left:2695px;top:1681px;width:71px;height:42px"></div><div class="t" id="score0" style="left:2716.66px;top:1692.37px;font-size:20px;color:#b8461c;font-weight:700;transform:scaleX(1.1896);transform-origin:0 50%;">65</div><div class="row" style="left:610px;top:1770px;width:2172px;height:104px"></div><div class="t" id="rank1" style="left:626px;top:1807.90px;font-size:28px;color:#677084;font-weight:700;">2</div><div class="t" id="name1" style="left:691.1px;top:1793.00px;font-size:28px;color:#181b25;font-weight:400;-webkit-text-stroke:0.95px #181b25;transform:scaleX(1.05);transform-origin:0 50%;">Alex Moreno</div><div class="t" id="comp1" style="left:690px;top:1830.38px;font-size:24px;color:#677084;font-weight:400;-webkit-text-stroke:0.48px #677084;">Harbor &amp; Pine Homes</div><div class="abs" style="left:2617px;top:1810px"><svg class="ic" width="24" height="24" viewBox="0 0 24 24" fill="none" stroke="#677084" stroke-width="2" stroke-linecap="round" stroke-linejoin="round" style=""><path d="M21 15a2 2 0 0 1-2 2H7l-4 4V5a2 2 0 0 1 2-2h14a2 2 0 0 1 2 2z"/></svg></div><div class="t" id="notes1" style="left:2645px;top:1811.18px;font-size:24px;color:#677084;font-weight:400;-webkit-text-stroke:0.48px #677084;">9</div><div class="badge" style="left:2695px;top:1801px;width:71px;height:42px"></div><div class="t" id="score1" style="left:2730.5px;transform:translateX(-50%);top:1812.37px;font-size:20px;color:#b8461c;font-weight:700;">58</div>
</body></html>
